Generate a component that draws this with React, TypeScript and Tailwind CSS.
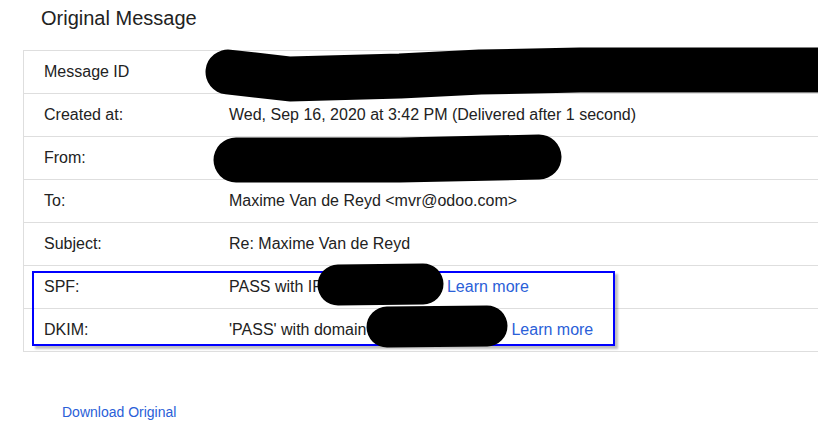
import React from "react";

const rows: { label: string; value: React.ReactNode }[] = [
  { label: "Message ID", value: "" },
  { label: "Created at:", value: "Wed, Sep 16, 2020 at 3:42 PM (Delivered after 1 second)" },
  { label: "From:", value: "" },
  { label: "To:", value: "Maxime Van de Reyd <mvr@odoo.com>" },
  { label: "Subject:", value: "Re: Maxime Van de Reyd" },
  {
    label: "SPF:",
    value: (
      <>
        PASS with IP
        <span className="inline-block w-[124px]" />
        <a className="text-[#2a60d8]">Learn more</a>
      </>
    ),
  },
  {
    label: "DKIM:",
    value: (
      <>
        'PASS' with domain
        <span className="inline-block w-[145px]" />
        <a className="text-[#2a60d8]">Learn more</a>
      </>
    ),
  },
];

export default function App() {
  return (
    <div
      className="relative w-[818px] h-[439px] overflow-hidden bg-white text-[#222222]"
      style={{ fontFamily: '"Liberation Sans", Arial, sans-serif' }}
    >
      <h1 className="pl-[41px] pt-[6px] text-[20px] leading-[24px] font-normal">Original Message</h1>
      <div className="ml-[23px] mt-[20px] w-[830px] border-l border-t border-[#dedede]">
        {rows.map((r) => (
          <div key={r.label} className="flex h-[43px] items-center border-b border-[#dedede] text-[16px]">
            <div className="w-[205px] shrink-0 pl-[20px]">{r.label}</div>
            <div className="whitespace-nowrap">{r.value}</div>
          </div>
        ))}
      </div>
      <div className="mt-[51px] pl-[62px] text-[14px] leading-[18px] text-[#2a60d8]">Download Original</div>

      {/* annotation box */}
      <div className="absolute left-[32px] top-[271px] h-[75px] w-[583px] border-2 border-[#0000ff] shadow-[3px_3px_2px_rgba(0,0,0,0.25)]" />

      {/* redactions */}
      <svg className="absolute left-0 top-0" width="818" height="439" viewBox="0 0 818 439">
        <g stroke="#000" fill="none" strokeLinecap="round" strokeLinejoin="round">
          <path d="M228 72 L290 79 L400 76 L480 72 L580 70 L840 70" strokeWidth="45" />
          <path d="M236 160 L400 160 L539 157" strokeWidth="45" />
          <path d="M338 285 L423 284" strokeWidth="41" />
          <path d="M387 327 L487 326" strokeWidth="41" />
        </g>
      </svg>
    </div>
  );
}
